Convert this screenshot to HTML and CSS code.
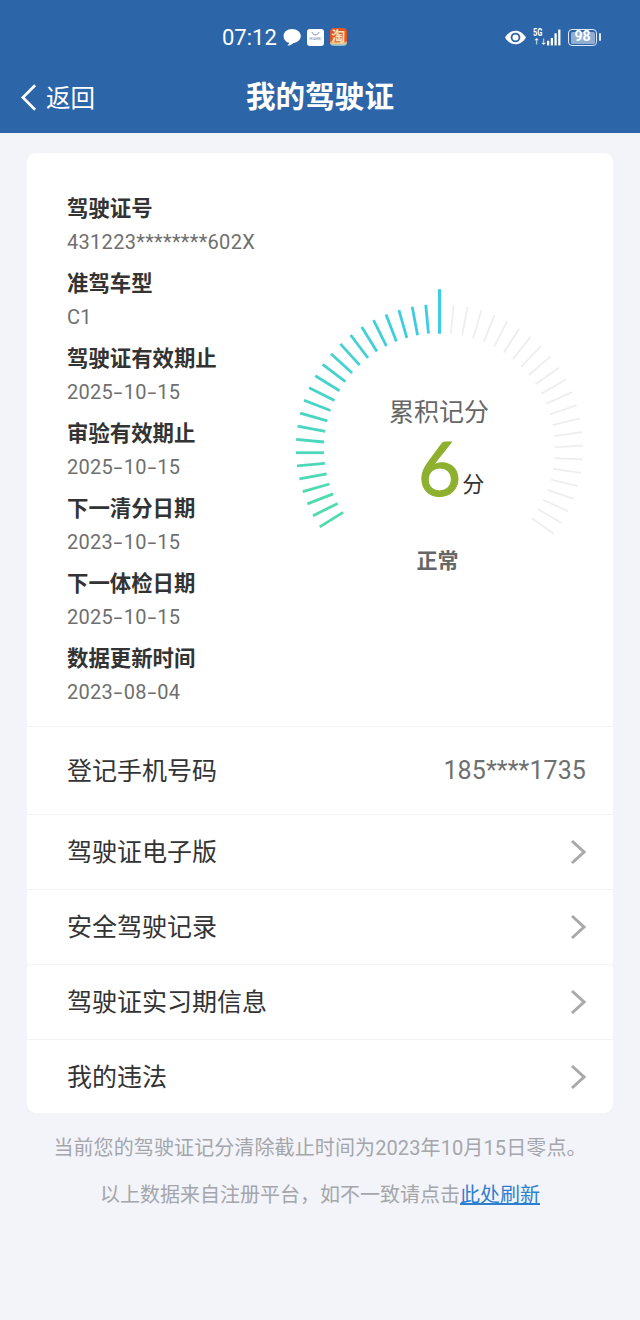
FILE: index.html
```html
<!DOCTYPE html>
<html lang="zh-CN">
<head>
    <meta charset="UTF-8">
    <meta name="viewport" content="width=device-width, initial-scale=1.0">
    <title>我的驾驶证</title>
    <link rel="stylesheet" href="styles.css">
</head>
<body>

    <header class="top">
        <div class="statusbar">
            <div class="status-left">
                <span class="time">07:12</span>
                <svg class="icon-bubble" viewBox="0 0 18 18"><path d="M9 1C4.2 1 .6 4 .6 8s3 6.4 5.4 6.8c.2 1-.8 2-1.6 2.7 2.6 0 4.8-1.300 6-2.600 4-.4 7.400-3 7.400-6.900C17.800 4 13.800 1 9 1z" fill="#fff"/></svg>
                <span class="icon-mall"><svg viewBox="0 0 10 4"><path d="M1 .5c1 2 2.500 3 4 3s3-1 4-3" fill="none" stroke="#5a7fae" stroke-width="1"/></svg><em>HUAWEI</em></span>
                <span class="icon-tao">淘</span>
            </div>
            <div class="status-right">
                <svg class="icon-eye" viewBox="0 0 22 16"><path d="M1 8c2.500-4.200 6-6.500 10-6.500S18.500 3.800 21 8c-2.500 4.200-6 6.500-10 6.500S3.500 12.200 1 8z" fill="#fff"/><circle cx="11" cy="8" r="4.600" fill="#2d65a9"/><circle cx="11" cy="8" r="2.900" fill="#fff"/></svg>
                <span class="signal">
                    <span class="net"><b>5G</b><small>↑↓</small></span>
                    <svg viewBox="0 0 15 17"><rect x="0" y="12" width="2.400" height="5" fill="#fff"/><rect x="4" y="9" width="2.400" height="8" fill="#fff"/><rect x="8" y="4" width="2.400" height="13" fill="#fff"/><rect x="12" y="0" width="2.400" height="17" fill="#fff"/></svg>
                </span>
                <span class="battery"><span class="battery-body">98</span><span class="battery-cap"></span></span>
            </div>
        </div>
        <nav class="nav">
            <a class="back">
                <svg viewBox="0 0 18 30"><path d="M16 2L3 15l13 13" fill="none" stroke="#fff" stroke-width="2.800"/></svg>
                <span>返回</span>
            </a>
            <h1>我的驾驶证</h1>
            <span></span>
        </nav>
    </header>

    <main class="card">
        <section class="summary">
            <dl class="details">
                <dt>驾驶证号</dt>
                <dd>431223********602X</dd>
                <dt>准驾车型</dt>
                <dd>C1</dd>
                <dt>驾驶证有效期止</dt>
                <dd>2025<i>-</i>10<i>-</i>15</dd>
                <dt>审验有效期止</dt>
                <dd>2025<i>-</i>10<i>-</i>15</dd>
                <dt>下一清分日期</dt>
                <dd>2023<i>-</i>10<i>-</i>15</dd>
                <dt>下一体检日期</dt>
                <dd>2025<i>-</i>10<i>-</i>15</dd>
                <dt>数据更新时间</dt>
                <dd>2023<i>-</i>08<i>-</i>04</dd>
            </dl>
            <div class="gauge">
                <svg id="ticks" class="ticks" viewBox="0 0 300 260"></svg>
                <div class="gauge-text">
                    <p class="gauge-title">累积记分</p>
                    <p class="gauge-score"><strong>6</strong><span>分</span></p>
                </div>
                <p class="gauge-status">正常</p>
            </div>
        </section>

        <div class="row row-phone">
            <span class="row-name">登记手机号码</span>
            <span class="row-value">185****1735</span>
        </div>
        <a class="row">
            <span class="row-name">驾驶证电子版</span>
            <svg class="chevron" viewBox="0 0 16 26"><path d="M2 2l12 11L2 24" fill="none" stroke="#a9a9a9" stroke-width="3"/></svg>
        </a>
        <a class="row">
            <span class="row-name">安全驾驶记录</span>
            <svg class="chevron" viewBox="0 0 16 26"><path d="M2 2l12 11L2 24" fill="none" stroke="#a9a9a9" stroke-width="3"/></svg>
        </a>
        <a class="row">
            <span class="row-name">驾驶证实习期信息</span>
            <svg class="chevron" viewBox="0 0 16 26"><path d="M2 2l12 11L2 24" fill="none" stroke="#a9a9a9" stroke-width="3"/></svg>
        </a>
        <a class="row row-last">
            <span class="row-name">我的违法</span>
            <svg class="chevron" viewBox="0 0 16 26"><path d="M2 2l12 11L2 24" fill="none" stroke="#a9a9a9" stroke-width="3"/></svg>
        </a>
    </main>

    <footer class="notes">
        <p class="note-first">当前您的驾驶证记分清除截止时间为2023年10月15日零点。</p>
        <p>以上数据来自注册平台，如不一致请点击<a class="refresh">此处刷新</a></p>
    </footer>

    <script>
        var svg = document.getElementById("ticks");
        var cx = 149.5;
        var cy = 167.7;

        function addTick(deg, outer, inner, color, width) {
            var a = deg * Math.PI / 180;
            var s = Math.sin(a);
            var c = Math.cos(a);
            var ro = outer + 5 * s;
            var ri = inner + 4 * s;
            var line = document.createElementNS("http://www.w3.org/2000/svg", "line");
            line.setAttribute("x1", cx + ro * c);
            line.setAttribute("y1", cy - ro * s);
            line.setAttribute("x2", cx + ri * c);
            line.setAttribute("y2", cy - ri * s);
            line.setAttribute("stroke", color);
            line.setAttribute("stroke-width", width);
            svg.appendChild(line);
        }

        // parte colorida, do topo ate a ponta de baixo
        for (var i = 0; i <= 23; i++) {
            var t = i / 23;
            var r = Math.round(60 + (80 - 60) * t);
            var g = Math.round(203 + (220 - 203) * t);
            var b = Math.round(234 + (170 - 234) * t);
            if (i === 0) {
                addTick(90, 158.5, 115, "rgb(60,203,234)", 3);
            } else {
                addTick(90 + i * 90 / 17, 143.5, 115.5, "rgb(" + r + "," + g + "," + b + ")", 2.8);
            }
        }

        // parte cinza
        for (var j = 1; j <= 23; j++) {
            addTick(90 - j * 5.45, 143.5, 115.5, "#eeeeee", 1.8);
        }
    </script>

</body>
</html>
```

FILE: styles.css
```css
* {
    box-sizing: border-box;
}

body {
    font-family: Roboto, "Noto Sans CJK SC", sans-serif;
    background-color: #f3f4f9;
    color: #333;
    margin: 0;
    min-height: 100vh;
}

.top {
    background-color: #2d65a9;
    color: #fff;
    height: 133px;
}

.statusbar {
    height: 74px;
    padding: 0 39px 0 222px;
    display: flex;
    justify-content: space-between;
    align-items: center;
}

.status-left,
.status-right {
    display: flex;
    align-items: center;
}

.time {
    font-size: 22px;
    line-height: 28px;
    margin: 2px 6px 0 0;
}

.icon-bubble {
    width: 18px;
    height: 18px;
    margin-right: 6px;
}

.icon-mall {
    width: 17px;
    height: 17px;
    background-color: #fff;
    border-radius: 3px;
    margin-right: 6px;
    display: flex;
    flex-direction: column;
    align-items: center;
    overflow: hidden;
}

.icon-mall svg {
    width: 9px;
    height: 5px;
    margin-top: 2px;
}

.icon-mall em {
    font-size: 4px;
    line-height: 6px;
    font-style: normal;
    color: #5a7fae;
    transform: scaleX(0.8);
}

.icon-tao {
    width: 17px;
    height: 18px;
    border-radius: 4px;
    background: linear-gradient(#e0562a 70%, #f5c98a 85%, #6cb8e0);
    color: #fbe3b4;
    font-size: 14px;
    line-height: 17px;
    font-weight: 700;
    text-align: center;
}

.icon-eye {
    width: 23px;
    height: 17px;
    margin-right: 6px;
}

.signal {
    display: flex;
    align-items: center;
    margin-right: 7px;
}

.net {
    display: flex;
    flex-direction: column;
    width: 14px;
}

.net b {
    font-size: 10px;
    line-height: 10px;
    transform: scaleX(0.75);
    transform-origin: left;
}

.net small {
    font-size: 7px;
    line-height: 8px;
    font-weight: 700;
}

.signal svg {
    width: 14px;
    height: 17px;
}

.battery {
    display: flex;
    align-items: center;
}

.battery-body {
    width: 29px;
    height: 17px;
    border: 1.5px solid #dfe9f5;
    border-radius: 4px;
    background-color: #8eaed3;
    background-clip: content-box;
    padding: 1.5px;
    font-size: 14px;
    line-height: 11px;
    font-weight: 700;
    text-align: center;
}

.battery-cap {
    width: 2px;
    height: 8px;
    margin-left: 2px;
    border-radius: 1px;
    background-color: #dfe9f5;
}

.nav {
    height: 59px;
    padding: 0 20px 13px;
    display: grid;
    grid-template-columns: 1fr auto 1fr;
    align-items: center;
}

.back {
    display: flex;
    align-items: center;
    font-size: 24.500px;
}

.back span {
    margin-bottom: 2px;
}

.back svg {
    width: 17px;
    height: 29px;
    margin-right: 9px;
}

.nav h1 {
    margin: 0;
    font-size: 29.600px;
    font-weight: 700;
    line-height: 40px;
}

.card {
    width: 586px;
    margin: 20px 0 0 27px;
    background-color: #fff;
    border-radius: 9px;
    overflow: hidden;
}

.summary {
    height: 573px;
    padding: 39px 0 0 40px;
    display: flex;
}

.details {
    width: 223px;
    margin: 0;
}

.details dt {
    font-size: 21.400px;
    font-weight: 700;
    line-height: 34px;
    color: #333;
}

.details dd {
    margin: 0 0 8px;
    font-size: 20px;
    line-height: 33px;
    letter-spacing: 0.3px;
    color: #6f6f6f;
    white-space: nowrap;
}

.details dd i {
    display: inline-block;
    width: 10.500px;
    font-style: normal;
    text-align: center;
    transform: scaleX(1.6);
}

.gauge {
    position: relative;
    width: 300px;
    margin-top: 93px;
    text-align: center;
}

.ticks {
    display: block;
    width: 300px;
    height: 260px;
}

.gauge-text {
    position: absolute;
    top: 113px;
    left: 0;
    width: 298px;
}

.gauge-title {
    margin: 0;
    font-size: 25px;
    line-height: 30px;
    color: #666;
}

.gauge-score {
    margin: 9px 0 0;
    height: 64px;
    display: flex;
    justify-content: center;
    align-items: flex-end;
    padding-left: 24px;
}

.gauge-score strong {
    font-family: Lato, sans-serif;
    font-size: 75px;
    line-height: 60px;
    font-weight: 400;
    -webkit-text-stroke: 1px #8db02e;
    margin-bottom: 4px;
    color: #8db02e;
}

.gauge-score span {
    font-size: 22px;
    line-height: 30px;
    margin: 0 0 1px 1px;
    color: #333;
}

.gauge-status {
    margin: 0;
    width: 295px;
    font-size: 21px;
    line-height: 32px;
    font-weight: 700;
    color: #666;
}

.row {
    height: 75px;
    padding: 0 27px 0 40px;
    border-top: 1px solid #f2f2f2;
    display: flex;
    justify-content: space-between;
    align-items: center;
    font-size: 25px;
    color: #333;
}

.row-name {
    margin-bottom: 4px;
}

.row-phone {
    height: 88px;
}

.row-last {
    height: 74px;
}

.row-value {
    letter-spacing: 0.1px;
    color: #6f6f6f;
}

.chevron {
    width: 16px;
    height: 26px;
}

.notes {
    margin-top: 12px;
    text-align: center;
    font-size: 20px;
    line-height: 47px;
    color: #a4a6ab;
}

.notes p {
    margin: 0;
}

.notes .note-first {
    letter-spacing: 0.11px;
}

.refresh {
    color: #2f7fd0;
    text-decoration: underline;
}
```
